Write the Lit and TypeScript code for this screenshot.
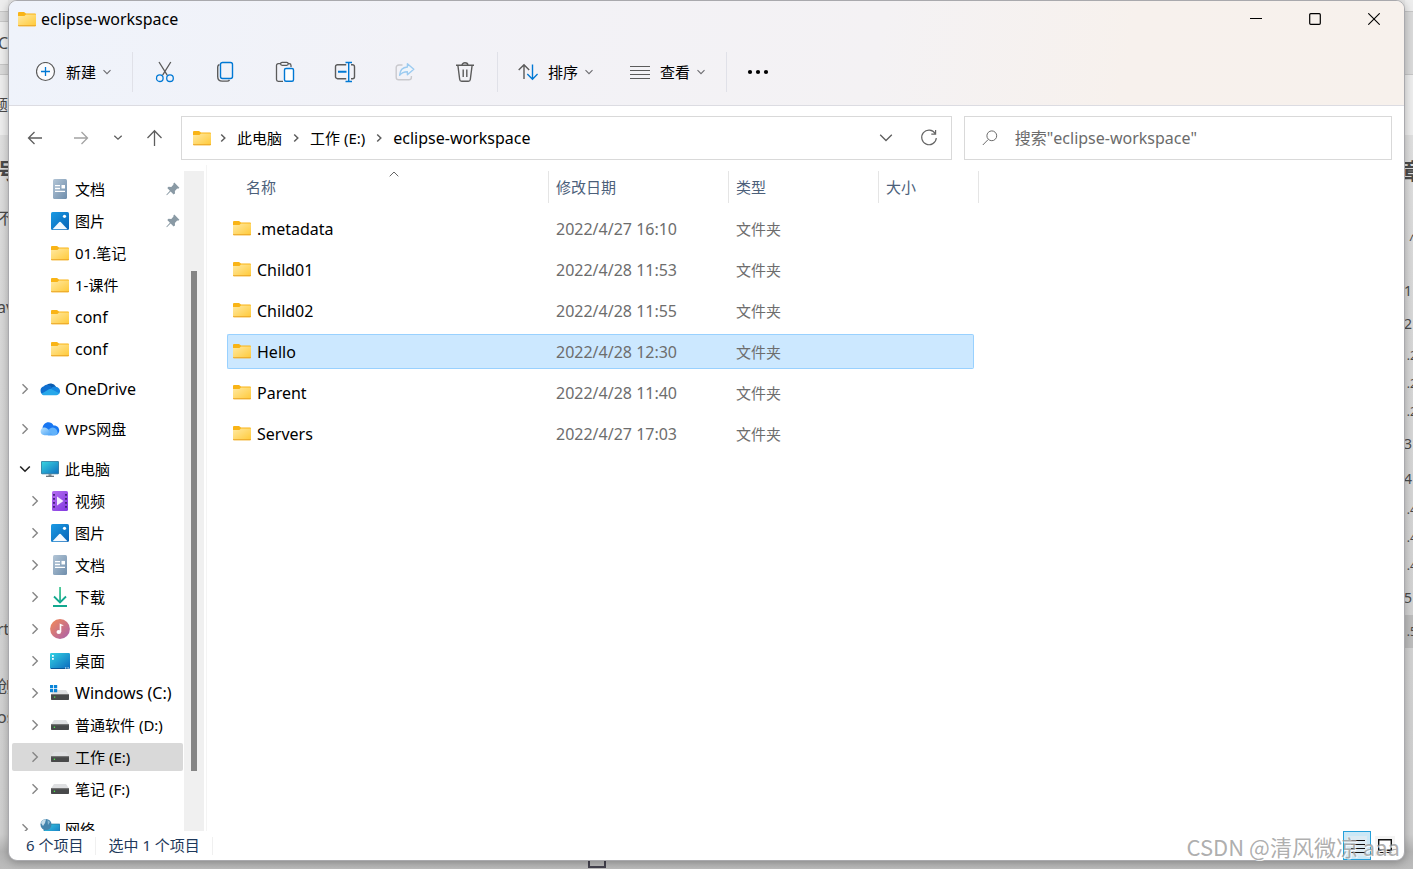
import { LitElement, html, css, svg, nothing, TemplateResult } from "lit";
import { customElement, property } from "lit/decorators.js";
import { classMap } from "lit/directives/class-map.js";

/* ---------- icon drawings ---------- */

const glyphs: Record<string, { w: number; h: number; body: TemplateResult }> = {
  folder: {
    w: 18, h: 15,
    body: svg`<defs><linearGradient id="g" x1="0" y1="0" x2="1" y2="1"><stop offset="0" stop-color="#ffe9a2"/><stop offset="1" stop-color="#ffc937"/></linearGradient></defs>
      <path d="M0 1a1 1 0 0 1 1-1h5l2 1.6h9a1 1 0 0 1 1 1V6H0z" fill="#f9b416"/>
      <path d="M0 4h6.400L8 2.600H18V13.500a.8.800 0 0 1-.8.800H.8A.8.800 0 0 1 0 13.500z" fill="url(#g)"/>
      <path d="M0 13.200h18v.3a.8.800 0 0 1-.8.800H.8a.8.800 0 0 1-.8-.8z" fill="#eaa425"/>`,
  },
  plus: {
    w: 20, h: 20,
    body: svg`<circle cx="9.500" cy="9.500" r="9" fill="#fbfbfd" stroke="#5b5b5b" stroke-width="1.200"/><path d="M9.500 5v9M5 9.500h9" stroke="#0078d4" stroke-width="1.300"/>`,
  },
  cut: {
    w: 20, h: 22,
    body: svg`<g fill="none" stroke-width="1.300"><path d="M4 1l8.200 13.200M15.800 1L7.600 14.200" stroke="#5b5b5b"/><circle cx="4.800" cy="17.200" r="3.300" stroke="#0078d4"/><circle cx="15" cy="17.200" r="3.300" stroke="#0078d4"/></g>`,
  },
  copy: {
    w: 20, h: 22,
    body: svg`<g fill="none" stroke-width="1.400"><path d="M4.500 3.500C3 4 2.700 5 2.700 6v9.500c0 3 1.600 4.600 4.500 4.600h5c1 0 1.800-.4 2.300-1.300" stroke="#5b5b5b"/><rect x="5.500" y="1.500" width="12" height="16" rx="2" stroke="#0078d4"/></g>`,
  },
  paste: {
    w: 20, h: 22,
    body: svg`<g fill="none" stroke-width="1.300"><path d="M8 20.300H3.200A1.700 1.700 0 0 1 1.500 18.600V4.400a1.700 1.700 0 0 1 1.700-1.700H6m7 0h1.300a1.700 1.700 0 0 1 1.700 1.700V6" stroke="#5b5b5b"/><rect x="5.600" y="1.300" width="7.600" height="3" rx="1.500" stroke="#5b5b5b"/><rect x="9.500" y="7.500" width="9" height="12.800" rx="1.500" fill="#fff" stroke="#0078d4" stroke-width="1.400"/></g>`,
  },
  rename: {
    w: 22, h: 22,
    body: svg`<g fill="none" stroke-width="1.400"><path d="M12.200 3.700H3.500a2 2 0 0 0-2 2v10a2 2 0 0 0 2 2h8.700M17 3.700h1.500a2 2 0 0 1 2 2v10a2 2 0 0 1-2 2H17" stroke="#5b5b5b"/><path d="M11.500 1.500h6.500M14.700 1.500v19M11.500 20.500h6.500" stroke="#0078d4"/><path d="M4 10.700h8.500" stroke="#0078d4" stroke-width="2"/></g>`,
  },
  share: {
    w: 20, h: 20,
    body: svg`<g fill="none" stroke-width="1.400" stroke-linejoin="round"><path d="M7.500 3H3.800A2.600 2.600 0 0 0 1.200 5.600v9.600a2.600 2.600 0 0 0 2.600 2.600h10a2.600 2.600 0 0 0 2.600-2.600V14" stroke="#c9c9cd"/><path d="M12.400 1.700l6.400 5.600-6.400 5.500V9.700c-3.400 0-5.700.9-7.800 3.600.3-4.600 2.900-8 7.800-8.300z" stroke="#9ccbf0" fill="#eff5fb"/></g>`,
  },
  trash: {
    w: 20, h: 22,
    body: svg`<g fill="none" stroke="#5b5b5b" stroke-width="1.400"><path d="M1 4.300h18M7 4.200a2.900 2.400 0 0 1 5.900 0"/><path d="M2.900 4.500l1.800 14a2 2 0 0 0 2 1.800h6.600a2 2 0 0 0 2-1.800l1.800-14"/><path d="M8.200 8.500v7.500M11.800 8.500v7.500"/></g>`,
  },
  sort: {
    w: 20, h: 18,
    body: svg`<g fill="none" stroke-width="1.400"><path d="M6 16V1.800M.7 7L6 1.700 11.200 7" stroke="#5b5b5b"/><path d="M14.500 1.500v14.600M9.300 11l5.200 5.200 5.100-5.200" stroke="#0078d4"/></g>`,
  },
  lines: {
    w: 20, h: 18,
    body: svg`<path d="M0 3.500h20M0 7.500h20M0 11.500h20M0 15.500h20" stroke="#5b5b5b" stroke-width="1.200"/>`,
  },
  dots: {
    w: 22, h: 6,
    body: svg`<circle cx="3" cy="3" r="2.100"/><circle cx="11" cy="3" r="2.100"/><circle cx="19" cy="3" r="2.100"/>`,
  },
  down: { w: 10, h: 10, body: svg`<path d="M1.500 3.200L5 6.700l3.500-3.500" fill="none" stroke="#6c6c70" stroke-width="1.100"/>` },
  back: { w: 20, h: 20, body: svg`<path d="M17 10H3.500M9.500 4l-6 6 6 6" fill="none" stroke="#5e5e5e" stroke-width="1.300"/>` },
  forward: { w: 20, h: 20, body: svg`<path d="M3 10h13.500M10.500 4l6 6-6 6" fill="none" stroke="#a3a3a3" stroke-width="1.300"/>` },
  recent: { w: 10, h: 10, body: svg`<path d="M1.300 2.700L5 6.200l3.700-3.500" fill="none" stroke="#5e5e5e" stroke-width="1.300"/>` },
  up: { w: 20, h: 20, body: svg`<path d="M9.500 18V3M2.500 10l7-7.200 7 7.200" fill="none" stroke="#5e5e5e" stroke-width="1.300"/>` },
  crumb: { w: 8, h: 10, body: svg`<path d="M2.200 1.500L5.800 5 2.200 8.500" fill="none" stroke="#5e5e5e" stroke-width="1.500"/>` },
  drop: { w: 14, h: 10, body: svg`<path d="M1.200 1.700L7 7.500l5.800-5.800" fill="none" stroke="#5e5e5e" stroke-width="1.300"/>` },
  refresh: { w: 18, h: 18, body: svg`<path d="M15.200 4.500A7.300 7.300 0 1 0 16.300 9M15.600 1v4.200h-4.300" fill="none" stroke="#666" stroke-width="1.200"/>` },
  search: { w: 16, h: 16, body: svg`<circle cx="9.800" cy="5.800" r="4.900" fill="none" stroke="#6b6b6b"/><path d="M6.200 9.500L.8 15" fill="none" stroke="#6b6b6b"/>` },
  min: { w: 12, h: 12, body: svg`<path d="M0 5.500h12" stroke="#000"/>` },
  max: { w: 12, h: 12, body: svg`<rect x=".7" y=".7" width="10.600" height="10.600" rx="1" fill="none" stroke="#000" stroke-width="1.200"/>` },
  close: { w: 12, h: 12, body: svg`<path d="M.3.3l11.400 11.400M11.700.3L.3 11.700" stroke="#000" stroke-width="1.100"/>` },
  caret: { w: 10, h: 6, body: svg`<path d="M.7 5.300L5 1l4.300 4.300" fill="none" stroke="#666"/>` },
  closed: { w: 8, h: 12, body: svg`<path d="M1.500 1.300L6.300 6l-4.800 4.700" fill="none" stroke="#858585" stroke-width="1.400"/>` },
  open: { w: 12, h: 8, body: svg`<path d="M1.200 1.500L6 6.200l4.800-4.700" fill="none" stroke="#222" stroke-width="1.600"/>` },
  pin: {
    w: 14, h: 14,
    body: svg`<path d="M8.300.6l5.100 5.100-1.200 1-1-.2-2.300 2.400.1 2.500-1.400 1.100-3-3L.9 13.200l-.6-.5 3.600-4L1.300 6.100l1.200-1.400 2.800.3 2.200-2.400-.2-.9z" fill="#8a9aa5"/>`,
  },
  doc: {
    w: 14, h: 20,
    body: svg`<defs><linearGradient id="g" x1="0" y1="0" x2="1" y2="1"><stop offset="0" stop-color="#b3c5d6"/><stop offset="1" stop-color="#6f8eac"/></linearGradient></defs><rect width="14" height="20" rx="1.500" fill="url(#g)"/><path d="M2 6.600h5M2 9.500h5M2 12.400h10" stroke="#fff" stroke-width="1.300"/><path d="M8.500 5.900H12v3.600H8.500z" fill="#fff"/>`,
  },
  picture: {
    w: 18, h: 18,
    body: svg`<defs><linearGradient id="g" x1="0" y1="0" x2="1" y2="1"><stop offset="0" stop-color="#1b9be4"/><stop offset="1" stop-color="#0862b5"/></linearGradient></defs><rect width="18" height="18" rx="1.600" fill="url(#g)"/><circle cx="13.500" cy="4.300" r="1.600" fill="#fff"/><path d="M1.500 17.300L8.300 10a1 1 0 0 1 1.400 0l6.800 7.300z" fill="#f3f9ff"/>`,
  },
  onedrive: {
    w: 20, h: 14,
    body: svg`<path d="M6 3.500A6.200 6.200 0 0 1 16 4.700L11 9z" fill="#0a5cb0"/><path d="M4.500 13A4.500 4.500 0 0 1 3.800 4.200C6.500 1.800 9.500 3 11 4.500l2 5z" fill="#0f6fd0"/><path d="M10 7.500c2-2.800 4.500-3.500 6.500-2.500A4.300 4.300 0 0 1 19 12z" fill="#1687e0"/><path d="M4.500 13.300C2.800 13.300 2 12.500 1.500 11.700L9 7.300c1.500-.7 2.800-.2 4 .6l6.300 3.400c-.6 1.300-1.600 2-3 2z" fill="#28a8ea"/>`,
  },
  wps: {
    w: 20, h: 14,
    body: svg`<defs><linearGradient id="g" x1="0" y1="0" x2="1" y2="1"><stop offset="0" stop-color="#b9e2ff"/><stop offset="1" stop-color="#3e9cf5"/></linearGradient></defs><path d="M2.500 7C2.500-.5 11-2 13.500 3.500 18 3.200 20 7 19 10c-.8 2.300-2.500 3.200-4 3.200H8z" fill="#1877f2"/><path d="M4.500 13.200C-.7 13.200-.7 5.500 4.500 5.500c3.500 0 5 3.700 9 7.700z" fill="url(#g)"/><path d="M8.500 8.200c2-3.400 6.500-3.600 8.500.3 1.700 3.500-.5 4.700-2.500 4.700h-2z" fill="#62b2fa"/>`,
  },
  pc: {
    w: 18, h: 16,
    body: svg`<defs><linearGradient id="g" x1="0" y1="0" x2="1" y2="1"><stop offset="0" stop-color="#3ad6e0"/><stop offset="1" stop-color="#0f6fc0"/></linearGradient></defs><rect x=".4" y=".4" width="17.200" height="12.400" rx=".6" fill="url(#g)" stroke="#1d6e96" stroke-width=".8"/><path d="M7.500 13h3v2h-3z" fill="#8b949b"/><path d="M5 15.300h8" stroke="#5d6870" stroke-width="1.200"/>`,
  },
  video: {
    w: 16, h: 20,
    body: svg`<defs><linearGradient id="g" x1="0" y1="0" x2="1" y2="1"><stop offset="0" stop-color="#b46cf0"/><stop offset="1" stop-color="#8139df"/></linearGradient></defs><rect width="16" height="20" rx="1.500" fill="url(#g)"/><path d="M2 3v15M14 3v15" stroke="#3f1d74" stroke-width="1.800" stroke-dasharray="1.800 2.200"/><path d="M5 5.500v9l6.500-4.500z" fill="#f4ecff"/>`,
  },
  download: {
    w: 16, h: 20,
    body: svg`<defs><linearGradient id="g" gradientUnits="userSpaceOnUse" x1="0" y1="0" x2="0" y2="20"><stop offset="0" stop-color="#37c58c"/><stop offset="1" stop-color="#0aa08e"/></linearGradient></defs><path d="M7.200 0h1.700v15H7.200z" fill="url(#g)"/><path d="M2 9.500l6 6 6-6M1 19h14" fill="none" stroke="#12a88f" stroke-width="1.800"/>`,
  },
  music: {
    w: 20, h: 20,
    body: svg`<defs><linearGradient id="g" x1="0" y1="0" x2="1" y2="1"><stop offset="0" stop-color="#f58b55"/><stop offset="1" stop-color="#a85fae"/></linearGradient></defs><circle cx="10" cy="10" r="9.900" fill="url(#g)"/><ellipse cx="8.800" cy="13" rx="2.300" ry="2.100" fill="#fff"/><path d="M9.700 4.300c1 1.200 3.600 1 3.800 3-1-.6-1.600-.6-2.200-.4V13H9.700z" fill="#fff"/>`,
  },
  desktop: {
    w: 20, h: 16,
    body: svg`<defs><linearGradient id="g" x1="0" y1="0" x2="1" y2="1"><stop offset="0" stop-color="#33d3e4"/><stop offset="1" stop-color="#0b68bd"/></linearGradient></defs><rect width="20" height="16" rx="1.200" fill="url(#g)"/><path d="M2 2h1.800v1.800H2zM2 5h1.800v1.800H2z" fill="#fff"/><path d="M1 15.500h18" stroke="#0a5596"/><path d="M15 15h1.300M17.500 15h1.300" stroke="#fff"/>`,
  },
  disk: {
    w: 18, h: 10,
    body: svg`<path d="M3 0h12l3 4.500H0z" fill="#dfe0e2"/><path d="M0 4.200h18v5.100a.7.700 0 0 1-.7.700H.7A.7.700 0 0 1 0 9.300z" fill="#48494a"/><path d="M0 4.200h18v1H0z" fill="#777"/><path d="M2.800 6.600h1.300V8H2.800z" fill="#4be04b"/>`,
  },
  system: {
    w: 20, h: 16,
    body: svg`<path d="M4 5h12l3 4.500H1z" fill="#dfe0e2"/><path d="M1 9h18v5.300a.7.700 0 0 1-.7.700H1.700a.7.700 0 0 1-.7-.7z" fill="#48494a"/><path d="M1 9h18v1H1z" fill="#777"/><path d="M4 11.500h1.300v1.300H4z" fill="#4be04b"/><path d="M0 0h3.200v3.200H0zM4 0h3.200v3.200H4zM0 4h3.200v3.200H0zM4 4h3.200v3.200H4z" fill="#0a84d8"/>`,
  },
  network: {
    w: 20, h: 20,
    body: svg`<defs><linearGradient id="g" x1="0" y1="0" x2="1" y2="1"><stop offset="0" stop-color="#3ccbe0"/><stop offset="1" stop-color="#0f6fc0"/></linearGradient></defs><rect x="4" y="5" width="16" height="12" rx=".6" fill="url(#g)" stroke="#1d6e96" stroke-width=".6"/><circle cx="6" cy="5.500" r="5.500" fill="#4384ad"/><path d="M1 4a5 5 0 0 1 5-3.700L5 4 3 7z" fill="#c3dcea"/><path d="M7.500 1l2.500 2-2 3z" fill="#8bbad4"/>`,
  },
  details: { w: 20, h: 20, body: svg`<path d="M0 0h20v20H0z" fill="#dcebf3"/><path d="M4 4.500h14M4 8.500h14M4 12.500h14M4 16.500h14" stroke="#111" stroke-width="1.200"/>` },
  large: { w: 20, h: 20, body: svg`<path d="M0 0h20v20H0z" fill="#f4f4f4"/><path d="M3.700 3.700h12.600v10.600H3.700z" fill="#fff" stroke="#111" stroke-width="1.400"/><path d="M3 16.500h5.500M10 16.500h7" stroke="#111" stroke-width="1.200"/>` },
};

@customElement("fx-icon")
export class FxIcon extends LitElement {
  @property() name = "folder";

  static styles = css`
    :host { display: inline-flex; flex: none; align-items: center; justify-content: center; }
    .glyph { display: block; }
  `;

  render() {
    const g = glyphs[this.name];
    return html`<svg class="glyph" width=${g.w} height=${g.h} viewBox="0 0 ${g.w} ${g.h}" aria-hidden="true">${g.body}</svg>`;
  }
}

/* ---------- data ---------- */

interface Place {
  icon: string;
  label: string;
  level: number;
  state?: "open" | "closed";
  pinned?: boolean;
  current?: boolean;
}

const places: Place[][] = [
  [
    { icon: "doc", label: "文档", level: 1, pinned: true },
    { icon: "picture", label: "图片", level: 1, pinned: true },
    { icon: "folder", label: "01.笔记", level: 1 },
    { icon: "folder", label: "1-课件", level: 1 },
    { icon: "folder", label: "conf", level: 1 },
    { icon: "folder", label: "conf", level: 1 },
  ],
  [{ icon: "onedrive", label: "OneDrive", level: 0, state: "closed" }],
  [{ icon: "wps", label: "WPS网盘", level: 0, state: "closed" }],
  [
    { icon: "pc", label: "此电脑", level: 0, state: "open" },
    { icon: "video", label: "视频", level: 1, state: "closed" },
    { icon: "picture", label: "图片", level: 1, state: "closed" },
    { icon: "doc", label: "文档", level: 1, state: "closed" },
    { icon: "download", label: "下载", level: 1, state: "closed" },
    { icon: "music", label: "音乐", level: 1, state: "closed" },
    { icon: "desktop", label: "桌面", level: 1, state: "closed" },
    { icon: "system", label: "Windows (C:)", level: 1, state: "closed" },
    { icon: "disk", label: "普通软件 (D:)", level: 1, state: "closed" },
    { icon: "disk", label: "工作 (E:)", level: 1, state: "closed", current: true },
    { icon: "disk", label: "笔记 (F:)", level: 1, state: "closed" },
  ],
  [{ icon: "network", label: "网络", level: 0, state: "closed" }],
];

const files = [
  { name: ".metadata", date: "2022/4/27 16:10" },
  { name: "Child01", date: "2022/4/28 11:53" },
  { name: "Child02", date: "2022/4/28 11:55" },
  { name: "Hello", date: "2022/4/28 12:30", selected: true },
  { name: "Parent", date: "2022/4/28 11:40" },
  { name: "Servers", date: "2022/4/27 17:03" },
];

const isLatin = (s: string) => /^[\x20-\x7e]+$/.test(s);

const base = css`
  * { box-sizing: border-box; }
  button { font: inherit; color: inherit; background: none; border: 0; padding: 0; margin: 0; }
  a { color: inherit; text-decoration: none; }
  .latin { font-size: 16px; }
`;

/* ---------- title bar and commands ---------- */

@customElement("fx-header")
export class FxHeader extends LitElement {
  static styles = [base, css`
    :host { display: block; background: linear-gradient(100deg, #eff3fb 0%, #f2f2f7 30%, #f4f2f4 62%, #f7f1ed 80%, #f7f1ec 100%); border-bottom: 1px solid #dcdce2; }
    .title { display: flex; align-items: center; height: 36px; padding: 0 1px 0 9px; gap: 5px; }
    .name { flex: 1; font-size: 16px; font-weight: 400; margin: 0; }
    .win { width: 59px; height: 36px; }
    .controls { display: flex; }
    .bar { display: flex; align-items: center; height: 68px; padding-top: 2px; }
    .group { display: flex; align-items: center; height: 40px; gap: 36px; padding: 0 20px; border-right: 1px solid #e0e1e8; }
    .first { padding-left: 27px; }
    .tools { gap: 0; padding: 0 2px; }
    .last { border: 0; }
    .cmd { display: flex; align-items: center; gap: 10px; height: 40px; }
    .caption { display: flex; align-items: center; gap: 6px; }
    .tool { width: 60px; height: 40px; display: flex; align-items: center; justify-content: center; }
  `];

  private cmd(icon: string, label: string) {
    return html`<button class="cmd"><fx-icon name=${icon}></fx-icon><span class="caption">${label}<fx-icon name="down"></fx-icon></span></button>`;
  }

  render() {
    const tools = [["cut", "剪切"], ["copy", "复制"], ["paste", "粘贴"], ["rename", "重命名"], ["share", "共享"], ["trash", "删除"]];
    const wins = [["min", "最小化"], ["max", "最大化"], ["close", "关闭"]];
    return html`
      <div class="title">
        <fx-icon name="folder"></fx-icon>
        <h1 class="name">eclipse-workspace</h1>
        <div class="controls">${wins.map(([i, l]) => html`<button class="win" aria-label=${l}><fx-icon name=${i}></fx-icon></button>`)}</div>
      </div>
      <div class="bar">
        <div class="group first">${this.cmd("plus", "新建")}</div>
        <div class="group tools">${tools.map(([i, l]) => html`<button class="tool" aria-label=${l} ?disabled=${i === "share"}><fx-icon name=${i}></fx-icon></button>`)}</div>
        <div class="group">${this.cmd("sort", "排序")}${this.cmd("lines", "查看")}</div>
        <div class="group last"><button class="cmd" aria-label="更多"><fx-icon name="dots"></fx-icon></button></div>
      </div>`;
  }
}

/* ---------- navigation arrows, address, search ---------- */

@customElement("fx-address")
export class FxAddress extends LitElement {
  static styles = [base, css`
    :host { display: flex; padding: 10px 12px 5px 3px; }
    .arrows { display: flex; align-items: center; width: 169px; flex: none; }
    .arrow { width: 46px; height: 44px; display: flex; align-items: center; justify-content: center; }
    .small { width: 28px; }
    .fields { flex: 1; min-width: 0; display: grid; grid-template-columns: 9fr 5fr; gap: 12px; }
    .box { display: flex; align-items: center; height: 44px; border: 1px solid #d9d9d9; background: #fff; min-width: 0; }
    .path { padding: 0 11px; }
    .crumbs { display: flex; align-items: center; gap: 10px; flex: 1; list-style: none; margin: 0; padding: 0 0 0 8px; white-space: nowrap; }
    .crumb { display: flex; align-items: center; gap: 10px; }
    .action { display: flex; align-items: center; justify-content: center; width: 22px; height: 40px; margin-left: 21px; }
    .find { padding-left: 17px; gap: 17px; }
    .query { flex: 1; min-width: 0; border: 0; outline: 0; padding: 0; background: none; font: inherit; font-size: 16px; line-height: 24px; }
    .query::placeholder { color: #6b6b6b; opacity: 1; }
  `];

  render() {
    return html`
      <div class="arrows">
        <button class="arrow" aria-label="后退"><fx-icon name="back"></fx-icon></button>
        <button class="arrow" aria-label="前进"><fx-icon name="forward"></fx-icon></button>
        <button class="arrow small" aria-label="最近浏览的位置"><fx-icon name="recent"></fx-icon></button>
        <button class="arrow" aria-label="上移"><fx-icon name="up"></fx-icon></button>
      </div>
      <div class="fields">
        <div class="box path">
          <fx-icon name="folder"></fx-icon>
          <ol class="crumbs">
            ${["此电脑", "工作 (E:)", "eclipse-workspace"].map((c) => html`
              <li class="crumb"><fx-icon name="crumb"></fx-icon><button class=${classMap({ latin: isLatin(c) })}>${c}</button></li>`)}
          </ol>
          <button class="action" aria-label="历史记录"><fx-icon name="drop"></fx-icon></button>
          <button class="action" aria-label="刷新"><fx-icon name="refresh"></fx-icon></button>
        </div>
        <label class="box find">
          <fx-icon name="search"></fx-icon>
          <input class="query" type="text" aria-label="搜索" placeholder='搜索"eclipse-workspace"' />
        </label>
      </div>`;
  }
}

/* ---------- navigation pane ---------- */

@customElement("fx-sidebar")
export class FxSidebar extends LitElement {
  static styles = [base, css`
    :host { display: flex; width: 198px; padding-top: 6px; overflow: hidden; border-right: 1px solid #f4f4f4; }
    .tree { flex: 1; min-width: 0; padding: 4px 1px 0 3px; }
    .set { list-style: none; margin: 0 0 12px; padding: 0; display: flex; flex-direction: column; gap: 4px; }
    .place { display: flex; align-items: center; gap: 5px; height: 28px; padding: 0 3px; border-radius: 2px; white-space: nowrap; }
    .nested { padding-left: 13px; }
    .current { background: #d9d9d9; }
    .slot { width: 20px; }
    .label { flex: 1; }
    .track { width: 20px; margin-right: 2px; background: #f0f0f0; padding: 100px 7px 60px; }
    .thumb { height: 100%; background: #858585; }
  `];

  render() {
    return html`
      <nav class="tree" aria-label="导航窗格">
        ${places.map((set) => html`<ul class="set">${set.map((p) => html`
          <li><a href="#" class=${classMap({ place: true, nested: p.level === 1, current: !!p.current, latin: isLatin(p.label) })}>
            ${p.state ? html`<fx-icon class="slot" name=${p.state}></fx-icon>` : html`<span class="slot"></span>`}
            <fx-icon class="slot" name=${p.icon}></fx-icon>
            <span class="label">${p.label}</span>
            ${p.pinned ? html`<fx-icon name="pin"></fx-icon>` : nothing}
          </a></li>`)}</ul>`)}
      </nav>
      <div class="track"><div class="thumb"></div></div>`;
  }
}

/* ---------- file list ---------- */

@customElement("fx-files")
export class FxFiles extends LitElement {
  static styles = [base, css`
    :host { display: block; flex: 1; min-width: 0; padding-left: 20px; overflow: hidden; }
    .list { table-layout: fixed; width: 747px; border-collapse: separate; border-spacing: 0 6px; }
    .c-name { width: 322px; }
    .c-date { width: 180px; }
    .c-type { width: 150px; }
    th { padding: 0 0 2px; font-weight: 400; text-align: left; color: #4c607a; }
    .head { display: grid; width: 100%; height: 32px; align-items: center; text-align: left; border-right: 1px solid #e5e5e5; padding-left: 7px; }
    .head-name { padding-left: 12px; }
    .head-text { grid-area: 1 / 1; }
    .head-name .head-text { padding-left: 7px; }
    .head-sort { grid-area: 1 / 1; align-self: start; justify-self: center; }
    .wide { width: calc(100% + 5px); }
    td { height: 35px; padding: 0 7px; color: #6d6d6d; border: solid transparent; border-width: 1px 0; }
    td:first-child { padding: 0 5px; color: #000; border-left-width: 1px; border-radius: 2px 0 0 2px; }
    td:last-child { border-right-width: 1px; border-radius: 0 2px 2px 0; }
    .selected td { background: #cce8ff; border-color: #99d1ff; }
    .file { display: flex; align-items: center; gap: 6px; }
  `];

  render() {
    return html`
      <table class="list">
        <colgroup><col class="c-name" /><col class="c-date" /><col class="c-type" /><col /></colgroup>
        <thead><tr>
          <th aria-sort="ascending"><button class="head head-name"><span class="head-text">名称</span><fx-icon class="head-sort" name="caret"></fx-icon></button></th>
          <th><button class="head"><span class="head-text">修改日期</span></button></th>
          <th><button class="head"><span class="head-text">类型</span></button></th>
          <th><button class="head wide"><span class="head-text">大小</span></button></th>
        </tr></thead>
        <tbody>${files.map((f) => html`
          <tr class=${classMap({ selected: !!f.selected })}>
            <td class="latin"><span class="file"><fx-icon name="folder"></fx-icon>${f.name}</span></td>
            <td class="latin">${f.date}</td>
            <td>文件夹</td>
            <td></td>
          </tr>`)}</tbody>
      </table>`;
  }
}

/* ---------- status bar ---------- */

@customElement("fx-status")
export class FxStatus extends LitElement {
  static styles = [base, css`
    :host { display: flex; align-items: center; height: 29px; padding: 0 5px 0 17px; color: #1e395b; }
    .item { padding: 0 12px 2px 0; margin-right: 12px; border-right: 1px solid #f0f0f0; line-height: 16px; }
    .views { display: flex; margin-left: auto; }
    .view { width: 28px; height: 29px; display: flex; align-items: center; justify-content: center; border: 1px solid transparent; }
    .on { background: #cbe8f6; border-color: #26a0da; }
  `];

  render() {
    return html`
      <span class="item">6 个项目</span>
      <span class="item">选中 1 个项目</span>
      <div class="views">
        <button class="view on" aria-label="详细信息" aria-pressed="true"><fx-icon name="details"></fx-icon></button>
        <button class="view" aria-label="大图标"><fx-icon name="large"></fx-icon></button>
      </div>`;
  }
}

/* ---------- page ---------- */

@customElement("app-root")
export class AppRoot extends LitElement {
  static styles = [base, css`
    :host {
      display: grid; grid-template: minmax(0, 1fr) 8px / 8px minmax(0, 1fr) 8px; height: 100vh; overflow: hidden; position: relative;
      font: 15px/20px "Noto Sans", "Noto Sans CJK SC", sans-serif; color: #000;
      background: linear-gradient(#e6e6e6 0, #d9d9d9 30%, #cfcfcf 96%, #b4b4b4 98%, #bcbcbc 100%);
    }
    .window { grid-area: 1 / 2; display: flex; flex-direction: column; border: 1px solid #a9a9ad; border-radius: 9px; background: #fff; overflow: hidden; box-shadow: 0 2px 8px #0004; }
    .body { flex: 1; min-height: 0; display: flex; }
    .edge { display: grid; overflow: hidden; align-items: center; color: #4a4a4a; white-space: nowrap; min-height: 0; }
    .edge > span { display: flex; align-items: center; align-self: stretch; min-width: 0; text-indent: -3px; }
    .left { grid-area: 1 / 1 / 3 / 2; font-size: 16px; grid-template-rows: 11px 11px 42px 11px 60px 70px 26px 152px 234px 24px 33px 24px 38px; }
    .left > .light { justify-content: flex-end; text-indent: 0; }
    .right { grid-area: 1 / 3 / 3 / 4; font-size: 14px; grid-template-rows: 11px 64px 60px 70px 70px 32px 34px 29px 28px 28px 36px 34px 28px 28px 28px 35px 33px; }
    .light { background: #ededed; }
    .shade { background: #dadada; border: solid #c6c6c6; border-width: 1px 0; }
    .bold { font-size: 22px; font-weight: 700; }
    .right > .num { text-indent: -1px; }
    .right > .sub, .right > .hit { font-size: 12px; text-indent: -5px; }
    .right > .fold { text-indent: 4px; }
    .right > .hit { background: #bdbdbd; }
    .below { grid-area: 2 / 2; padding-left: 580px; }
    .tab { width: 18px; height: 7px; border: 2px solid #45434f; border-top: 0; }
    .mark { position: absolute; right: 13px; bottom: 10px; font: 400 22px/26px "Noto Sans CJK SC", sans-serif; color: #999c; text-shadow: 1px 1px 0 #fffc; pointer-events: none; }
  `];

  render() {
    const left = [["light"], ["shade"], ["light", "C"], ["shade"], ["light", "题"], ["bold", "号"], ["", "不"], ["", "av"], [""], ["", "rt"], [""], ["", "创"], ["", "os"]];
    const right = [["light"], ["shade"], ["light"], ["bold", "章"], ["fold", "^"], ["num", "1"], ["num", "2"], ["sub", "1.2"], ["sub", "1.2"], ["sub", "1.2"], ["num", "3"], ["num", "4"], ["sub", "1.4"], ["sub", "1.4"], ["sub", "1.4"], ["num", "5"], ["hit", "1.5"]];
    return html`
      <div class="edge left" aria-hidden="true">${left.map(([c, t]) => html`<span class=${c}>${t}</span>`)}</div>
      <div class="edge right" aria-hidden="true">${right.map(([c, t]) => html`<span class=${c}>${t}</span>`)}</div>
      <div class="below"><div class="tab"></div></div>
      <main class="window">
        <fx-header></fx-header>
        <fx-address></fx-address>
        <div class="body"><fx-sidebar></fx-sidebar><fx-files></fx-files></div>
        <fx-status></fx-status>
      </main>
      <div class="mark">CSDN @清风微凉 aaa</div>`;
  }
}
